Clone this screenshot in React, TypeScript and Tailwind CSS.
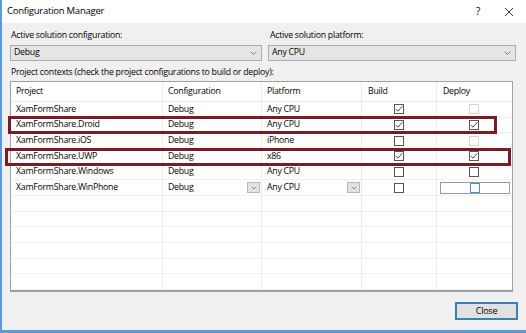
import React from "react";

type State = "checked" | "unchecked" | "disabled" | "focus";

const rows: { p: string; c: string; pl: string; b: State; d: State }[] = [
  { p: "XamFormShare", c: "Debug", pl: "Any CPU", b: "checked", d: "disabled" },
  { p: "XamFormShare.Droid", c: "Debug", pl: "Any CPU", b: "checked", d: "checked" },
  { p: "XamFormShare.iOS", c: "Debug", pl: "iPhone", b: "unchecked", d: "disabled" },
  { p: "XamFormShare.UWP", c: "Debug", pl: "x86", b: "checked", d: "checked" },
  { p: "XamFormShare.Windows", c: "Debug", pl: "Any CPU", b: "unchecked", d: "unchecked" },
  { p: "XamFormShare.WinPhone", c: "Debug", pl: "Any CPU", b: "unchecked", d: "focus" },
];

function Check({ s }: { s: State }) {
  const border =
    s === "disabled" ? "border-[#d4d4d4]" : s === "focus" ? "border-[#4a90d9]" : "border-[#555555]";
  return (
    <div className={`w-[10px] h-[10px] border ${border} bg-white flex items-center justify-center`}>
      {s === "checked" && (
        <svg width="8" height="8" viewBox="0 0 8 8">
          <path d="M0.8 4 L3 6.2 L7.2 1.2" fill="none" stroke="#444" strokeWidth="1" />
        </svg>
      )}
    </div>
  );
}

function Chevron({ size = 7 }: { size?: number }) {
  return (
    <svg width={size} height={size * 0.6} viewBox="0 0 10 6">
      <path d="M1 1 L5 5 L9 1" fill="none" stroke="#666" strokeWidth="1.2" />
    </svg>
  );
}

function MiniDrop() {
  return (
    <div className="w-[13px] h-[11px] bg-[#e3e3e3] border border-[#b9b9b9] flex items-center justify-center">
      <Chevron size={6} />
    </div>
  );
}

const cell = "border-r border-[#ececec] flex items-center";

export default function App() {
  return (
    <div
      className="relative w-[526px] h-[333px] bg-[#f0f0f0] border-l-2 border-b-[3px] border-[#5a9ad6] flex flex-col overflow-hidden text-black text-[8.75px] tracking-[-0.25px]"
      style={{ fontFamily: '"Open Sans", "Noto Sans", sans-serif' }}
    >
      {/* Title bar */}
      <div className="h-[23px] bg-white flex items-center pl-[5px] pr-[12px] shrink-0">
        <span className="text-[9.5px]">Configuration Manager</span>
        <span className="ml-auto text-[10px] mr-[24px]">?</span>
        <svg width="10" height="10" viewBox="0 0 10 10">
          <path d="M1 1 L9 9 M9 1 L1 9" stroke="#333" strokeWidth="1" />
        </svg>
      </div>

      {/* Body */}
      <div className="flex flex-col pl-[8px] pt-[6px]">
        <div className="flex gap-[6px]">
          <div className="w-[252px] flex flex-col">
            <div className="h-[13px] leading-[13px] pl-[1px]">Active solution configuration:</div>
            <div className="mt-[3px] h-[16px] bg-[#e5e5e5] border border-[#adadad] flex items-center pl-[3px] pr-[4px]">
              <span>Debug</span>
              <span className="ml-auto"><Chevron /></span>
            </div>
          </div>
          <div className="w-[248px] flex flex-col">
            <div className="h-[13px] leading-[13px] pl-[2px]">Active solution platform:</div>
            <div className="mt-[3px] h-[16px] bg-[#e5e5e5] border border-[#adadad] flex items-center pl-[3px] pr-[4px]">
              <span>Any CPU</span>
              <span className="ml-auto"><Chevron /></span>
            </div>
          </div>
        </div>

        <div className="mt-[5px] h-[13px] leading-[13px] pl-[1px]">
          Project contexts (check the project configurations to build or deploy):
        </div>

        {/* Table */}
        <div className="mt-[2px] w-[503px] border border-[#a0a0a0] border-b-2 bg-white flex flex-col">
          <div className="h-[20px] flex border-b border-[#ececec]">
            <div className={`${cell} w-[152px] pl-[5px]`}>Project</div>
            <div className={`${cell} w-[99px] pl-[5px]`}>Configuration</div>
            <div className={`${cell} w-[100px] pl-[5px]`}>Platform</div>
            <div className={`${cell} w-[75px] pl-[6px]`}>Build</div>
            <div className="flex items-center flex-1 pl-[6px]">Deploy</div>
          </div>
          {Array.from({ length: 12 }).map((_, i) => {
            const r = rows[i];
            return (
              <div key={i} className="h-[15.67px] flex border-b border-[#f0f0f0]">
                <div className={`${cell} w-[152px] pl-[5px]`}>{r?.p}</div>
                <div className={`${cell} w-[99px] pl-[5px] pr-[1px]`}>
                  {r?.c}
                  {r?.d === "focus" && (
                    <span className="ml-auto">
                      <MiniDrop />
                    </span>
                  )}
                </div>
                <div className={`${cell} w-[100px] pl-[5px] pr-[1px]`}>
                  {r?.pl}
                  {r?.d === "focus" && (
                    <span className="ml-auto">
                      <MiniDrop />
                    </span>
                  )}
                </div>
                <div className={`${cell} w-[75px] justify-center`}>{r && <Check s={r.b} />}</div>
                <div className="flex items-center justify-center flex-1 pr-[2px]">
                  {r &&
                    (r.d === "focus" ? (
                      <div className="ml-[3px] w-[70px] h-[12px] border border-[#9a9a9a] flex items-center justify-center">
                        <Check s="focus" />
                      </div>
                    ) : (
                      <Check s={r.d} />
                    ))}
                </div>
              </div>
            );
          })}
        </div>

        <div className="flex justify-end pr-[8px] mt-[10px]">
          <button className="w-[63px] h-[18px] bg-[#e1e1e1] border-2 border-[#3c7fb1] flex items-center justify-center text-[9px]">
            Close
          </button>
        </div>
      </div>

      {/* Highlight annotations */}
      <div className="absolute left-[6px] top-[116px] w-[489px] h-[18px] border-[3px] border-[#7b1c24]" />
      <div className="absolute left-[3px] top-[148px] w-[506px] h-[18px] border-[3px] border-[#7b1c24]" />
    </div>
  );
}
